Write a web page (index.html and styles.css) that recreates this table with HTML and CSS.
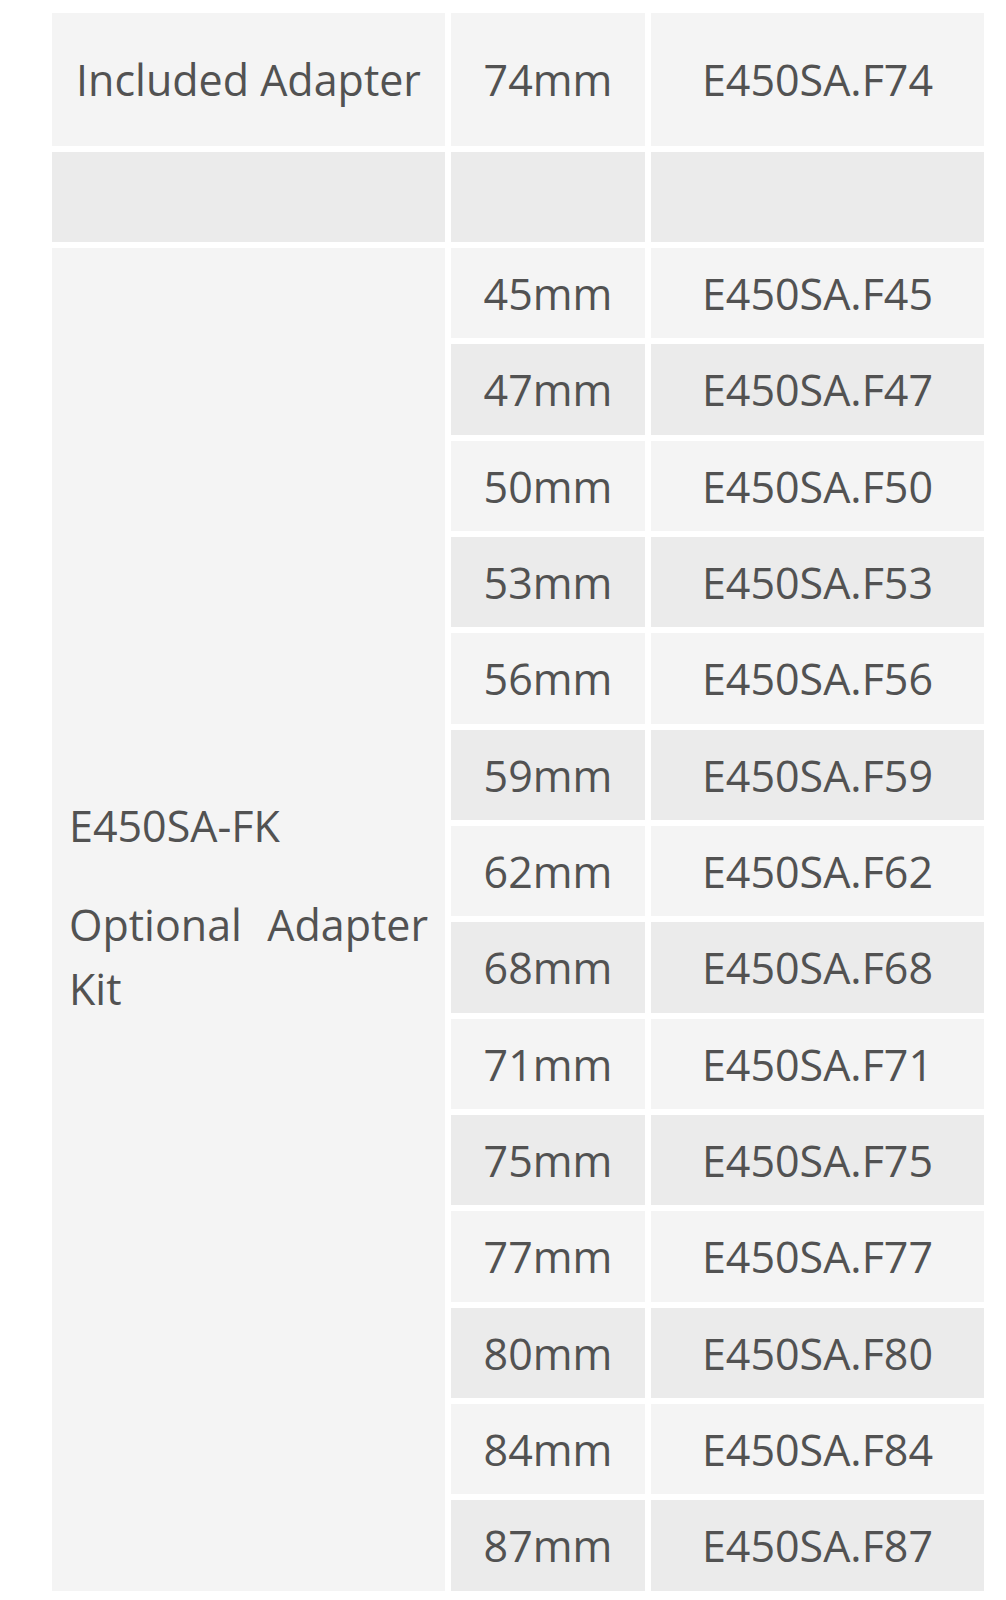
FILE: index.html
```html
<!DOCTYPE html>
<html lang="en">
<head>
<meta charset="utf-8">
<title>Adapter table</title>
<link rel="stylesheet" href="styles.css">
</head>
<body>
<table class="spec">
  <colgroup>
    <col class="c1"><col class="c2"><col class="c3">
  </colgroup>
  <tbody>
    <tr class="r-head"><td>Included Adapter</td><td>74mm</td><td>E450SA.F74</td></tr>
    <tr class="r-blank"><td></td><td></td><td></td></tr>
    <tr class="r-item"><td class="kit" rowspan="14"><p class="kit-code">E450SA-FK</p><p class="kit-name">Optional Adapter Kit</p></td><td>45mm</td><td>E450SA.F45</td></tr>
    <tr class="r-item"><td>47mm</td><td>E450SA.F47</td></tr>
    <tr class="r-item"><td>50mm</td><td>E450SA.F50</td></tr>
    <tr class="r-item"><td>53mm</td><td>E450SA.F53</td></tr>
    <tr class="r-item"><td>56mm</td><td>E450SA.F56</td></tr>
    <tr class="r-item"><td>59mm</td><td>E450SA.F59</td></tr>
    <tr class="r-item"><td>62mm</td><td>E450SA.F62</td></tr>
    <tr class="r-item"><td>68mm</td><td>E450SA.F68</td></tr>
    <tr class="r-item"><td>71mm</td><td>E450SA.F71</td></tr>
    <tr class="r-item"><td>75mm</td><td>E450SA.F75</td></tr>
    <tr class="r-item"><td>77mm</td><td>E450SA.F77</td></tr>
    <tr class="r-item"><td>80mm</td><td>E450SA.F80</td></tr>
    <tr class="r-item"><td>84mm</td><td>E450SA.F84</td></tr>
    <tr class="r-item"><td>87mm</td><td>E450SA.F87</td></tr>
  </tbody>
</table>
</body>
</html>
```
FILE: styles.css
```css
html, body {
  margin: 0;
  padding: 0;
  background: #ffffff;
}

body {
  font-family: "Open Sans", "Liberation Sans", sans-serif;
  font-size: 43px;
  line-height: 1.5;
  color: #525252;
}

.spec {
  margin: 7px 0 0 46px;
  border-collapse: separate;
  border-spacing: 6px;
  table-layout: fixed;
  width: 944px;
}

.c1 { width: 393px; }
.c2 { width: 194px; }
.c3 { width: 333px; }

.spec td {
  padding: 2px 0 0 0;
  text-align: center;
  vertical-align: middle;
  white-space: nowrap;
}

.spec tr:nth-child(odd) td { background: #f4f4f4; }
.spec tr:nth-child(even) td { background: #ebebeb; }

.r-head td { height: 131px; }
.r-blank td { height: 88px; }
.r-item td { height: 88.35px; }

.spec td.kit {
  white-space: normal;
  text-align: justify;
  padding: 2px 17px 25px 17px;
}

.kit-code {
  margin: 0 0 34px 0;
}

.kit-name {
  margin: 0;
}
```
